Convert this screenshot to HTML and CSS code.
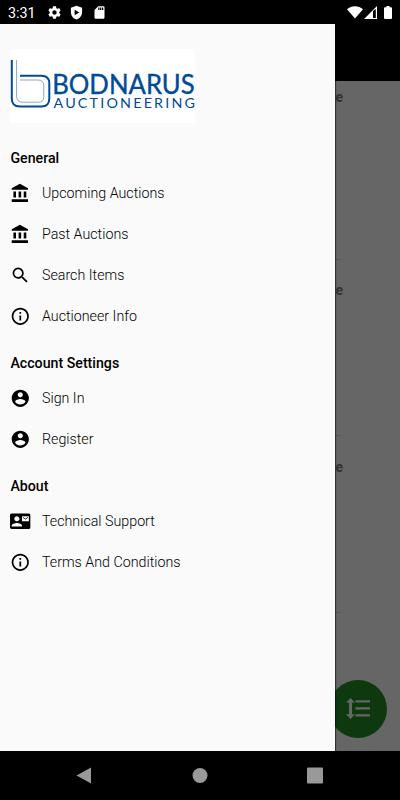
FILE: index.html
```html
<!DOCTYPE html>
<html lang="en">
<head>
  <meta charset="UTF-8" />
  <meta name="viewport" content="width=device-width, initial-scale=1.0" />
  <title>Bodnarus Auctioneering</title>
  <link rel="stylesheet" href="styles.css">
</head>
<body>
  <svg class="sprite" aria-hidden="true">
    <symbol id="bank" viewBox="0 0 24 24"><path d="M4 10v7h3v-7H4zm6 0v7h3v-7h-3zM2 22h19v-3H2v3zm14-12v7h3v-7h-3zm-4.500-9L2 6v2h19V6l-9.500-5z"/></symbol>
    <symbol id="search" viewBox="0 0 24 24"><path d="M15.500 14h-.79l-.28-.27A6.471 6.471 0 0 0 16 9.500 6.500 6.500 0 1 0 9.500 16c1.610 0 3.090-.59 4.230-1.570l.27.28v.79l5 4.990L20.490 19l-4.990-5zm-6 0C7.010 14 5 11.990 5 9.500S7.010 5 9.500 5 14 7.010 14 9.500 11.990 14 9.500 14z"/></symbol>
    <symbol id="info" viewBox="0 0 24 24"><path d="M11 17h2v-6h-2v6zm1-15C6.480 2 2 6.480 2 12s4.480 10 10 10 10-4.480 10-10S17.520 2 12 2zm0 18c-4.410 0-8-3.590-8-8s3.590-8 8-8 8 3.590 8 8-3.590 8-8 8zM11 9h2V7h-2v2z"/></symbol>
    <symbol id="account" viewBox="0 0 24 24"><path d="M12 2C6.480 2 2 6.480 2 12s4.480 10 10 10 10-4.480 10-10S17.520 2 12 2zm0 3c1.660 0 3 1.340 3 3s-1.340 3-3 3-3-1.340-3-3 1.340-3 3-3zm0 14.200c-2.500 0-4.710-1.280-6-3.220.03-1.990 4-3.080 6-3.080 1.990 0 5.970 1.090 6 3.080-1.290 1.940-3.500 3.220-6 3.220z"/></symbol>
    <symbol id="contact" viewBox="0 0 24 24"><path d="M21 8V7l-3 2-3-2v1l3 2 3-2zm1-5H2C.9 3 0 3.900 0 5v14c0 1.100.9 2 2 2h20c1.100 0 1.990-.9 1.990-2L24 5c0-1.100-.9-2-2-2zM8 6c1.660 0 3 1.340 3 3s-1.340 3-3 3-3-1.340-3-3 1.340-3 3-3zm6 12H2v-1c0-2 4-3.100 6-3.100s6 1.100 6 3.100v1zm8-6h-8V6h8v6z"/></symbol>
  </svg>

  <div class="screen">
    <header class="status-bar">
      <span class="clock">3:31</span>
      <svg class="status-icon" viewBox="0 0 24 24"><path d="M19.430 12.980c.04-.32.07-.64.07-.98s-.03-.66-.07-.98l2.110-1.650c.19-.15.24-.42.12-.64l-2-3.460c-.12-.22-.39-.3-.61-.22l-2.490 1c-.52-.4-1.080-.73-1.690-.98l-.38-2.650C14.460 2.180 14.250 2 14 2h-4c-.25 0-.46.18-.49.42l-.38 2.650c-.61.25-1.170.59-1.690.98l-2.490-1c-.23-.09-.49 0-.61.22l-2 3.460c-.13.22-.07.49.12.64l2.110 1.650c-.04.32-.07.65-.07.98s.03.66.07.98l-2.110 1.650c-.19.15-.24.42-.12.64l2 3.460c.12.22.39.3.61.22l2.490-1c.52.4 1.080.73 1.690.98l.38 2.650c.03.24.24.42.49.42h4c.25 0 .46-.18.49-.42l.38-2.650c.61-.25 1.170-.59 1.690-.98l2.490 1c.23.09.49 0 .61-.22l2-3.460c.12-.22.07-.49-.12-.64l-2.110-1.650zM12 15.500c-1.930 0-3.500-1.570-3.500-3.500s1.570-3.500 3.500-3.500 3.500 1.570 3.500 3.500-1.570 3.500-3.500 3.500z"/></svg>
      <svg class="status-icon" viewBox="0 0 24 24"><path fill-rule="evenodd" d="M12 1L3 4.500V11c0 5.550 3.840 10.740 9 12 5.160-1.260 9-6.450 9-12V4.500L12 1zM9 7.500v9l7.500-4.500L9 7.500z"/></svg>
      <svg class="status-icon" viewBox="0 0 24 24"><path d="M18 2h-8L4 8v12c0 1.100.9 2 2 2h12c1.100 0 2-.9 2-2V4c0-1.100-.9-2-2-2zm-6 6h-2V4h2v4zm3 0h-2V4h2v4zm3 0h-2V4h2v4z"/></svg>
      <span class="spacer"></span>
      <svg class="wifi" viewBox="0 0 16 13"><path d="M0 3.200C4.500-.7 11.500-.7 16 3.200L8 12.500z"/></svg>
      <svg class="signal" viewBox="0 0 13 13"><path fill-rule="evenodd" d="M13 0v13H0zM9 5v7h2.800V3z"/></svg>
      <svg class="battery" viewBox="0 0 8 13"><path d="M2.500 0h3v1.300H7q1 0 1 1V12q0 1-1 1H1q-1 0-1-1V2.300q0-1 1-1h1.500z"/></svg>
    </header>

    <main class="app">
      <div class="app-bar"></div>
      <div class="auctions">
        <div class="auction"><b>Online</b></div>
        <div class="auction"><b>Online</b></div>
        <div class="auction"><b>Online</b></div>
      </div>

      <button class="fab" aria-label="Sort">
        <svg viewBox="0 0 24 22"><path d="M4.500 0L9 4.800H6v11.400h3L4.500 21 0 16.200h3V4.800H0zM9.500 2.200H24v2.200H9.500zM9.500 9.200H24v2.200H9.500zM9.500 16.200H24v2.200H9.500z"/></svg>
      </button>

      <nav class="drawer">
        <svg class="logo" viewBox="0 0 185 74">
          <rect x=".3" width="185" height="74" fill="#fff"/>
          <g class="logo-mark">
            <path d="M1.800 11v38.500q0 8 8 8H31.500q7.800 0 7.800-8V34.500q0-7.700-7.800-7.700H10"/>
            <path class="thin" d="M6.600 11v36.200q0 6 6 6H28.500q5.300 0 5.300-5.500V36.700q0-5.700-5.700-5.700H10"/>
          </g>
          <text class="logo-name" x="42.200" y="44.600" textLength="142.500" lengthAdjust="spacingAndGlyphs">BODNARUS</text>
          <text class="logo-sub" x="43.500" y="58.600" textLength="141.500" lengthAdjust="spacing">AUCTIONEERING</text>
        </svg>

        <h2>General</h2>
        <a class="item"><svg><use href="#bank"/></svg>Upcoming Auctions</a>
        <a class="item"><svg><use href="#bank"/></svg>Past Auctions</a>
        <a class="item"><svg><use href="#search"/></svg>Search Items</a>
        <a class="item"><svg><use href="#info"/></svg>Auctioneer Info</a>

        <h2>Account Settings</h2>
        <a class="item"><svg><use href="#account"/></svg>Sign In</a>
        <a class="item"><svg><use href="#account"/></svg>Register</a>

        <h2>About</h2>
        <a class="item"><svg><use href="#contact"/></svg>Technical Support</a>
        <a class="item"><svg><use href="#info"/></svg>Terms And Conditions</a>
      </nav>
    </main>

    <footer class="nav-bar">
      <svg viewBox="0 0 16 17"><path d="M15 .5v16L.5 8.500z"/></svg>
      <svg viewBox="0 0 16 16"><circle cx="8" cy="8" r="7.500"/></svg>
      <svg viewBox="0 0 16 16"><rect width="16" height="16" rx="1"/></svg>
    </footer>
  </div>
</body>
</html>
```
FILE: styles.css
```css
* {
  box-sizing: border-box;
}
body {
  margin: 0;
  font-family: Roboto, sans-serif;
  background: #000;
  color: #000;
}
.sprite {
  display: none;
}
.screen {
  display: flex;
  flex-direction: column;
  width: 400px;
  height: 800px;
  overflow: hidden;
}

/* status bar */
.status-bar {
  display: flex;
  align-items: center;
  height: 24px;
  padding: 1px 8px 0;
  color: #fff;
  fill: #fff;
}
.clock {
  width: 38.500px;
  padding-top: 1px;
  font-size: 14.300px;
}
.status-icon {
  width: 15px;
  height: 15px;
  margin-right: 7.800px;
}
.spacer {
  flex: 1;
}
.wifi {
  width: 16px;
  height: 13px;
}
.signal {
  width: 13px;
  height: 13px;
  margin: 0 7px 0 1px;
}
.battery {
  width: 8px;
  height: 13px;
}

/* dimmed page behind the drawer */
.app {
  position: relative;
  flex: 1;
  background: #666;
}
.app-bar {
  height: 57px;
  background: #000;
}
.auctions {
  padding-top: 2px;
}
.auction {
  width: 340px;
  height: 176.500px;
  padding-top: 22.800px;
  border-bottom: 1px solid #555;
  color: #333;
  font-size: 14px;
  line-height: 16px;
  display: flex;
  justify-content: flex-end;
}
.auction b {
  margin-right: -3px;
}
.auction:first-child {
  padding-top: 6px;
}
.fab {
  position: absolute;
  right: 13.500px;
  bottom: 13.500px;
  width: 58px;
  height: 58px;
  padding: 0;
  display: flex;
  align-items: center;
  justify-content: center;
  border: none;
  border-radius: 50%;
  background: #0e390f;
}
.fab svg {
  width: 24px;
  height: 22px;
  fill: #666;
}

/* drawer */
.drawer {
  position: absolute;
  top: 0;
  left: 0;
  bottom: 0;
  width: 335px;
  padding: 25px 10.400px 0;
  background: #fafafa;
  box-shadow: 1px 0 1px rgba(0, 0, 0, 0.5);
}
.logo {
  display: block;
  width: 185px;
  height: 74px;
  margin-bottom: 20.100px;
  overflow: visible;
}
.logo-mark {
  fill: none;
  stroke: #004a98;
  stroke-width: 2;
}
.logo-mark .thin {
  stroke: #6f8fbd;
  stroke-width: 0.8;
}
.logo text {
  font-family: Lato, sans-serif;
  fill: #004a98;
}
.logo-name {
  font-size: 27.800px;
  stroke: #004a98;
  stroke-width: 0.4;
}
.logo-sub {
  font-size: 14.300px;
}
.drawer h2 {
  height: 30px;
  margin: 11.600px 0 0;
  font-size: 14.200px;
  font-weight: 500;
  line-height: 30px;
}
.logo + h2 {
  margin-top: 0;
}
.item {
  display: flex;
  align-items: center;
  height: 40.800px;
  font-size: 14.250px;
  font-weight: 300;
}
.item svg {
  width: 20.600px;
  height: 20.600px;
  margin-right: 11px;
}

/* system buttons */
.nav-bar {
  display: flex;
  align-items: center;
  justify-content: space-between;
  height: 49px;
  padding: 0 77px 0 76px;
  fill: #999;
}
.nav-bar svg {
  width: 16px;
  height: 17px;
}
```
